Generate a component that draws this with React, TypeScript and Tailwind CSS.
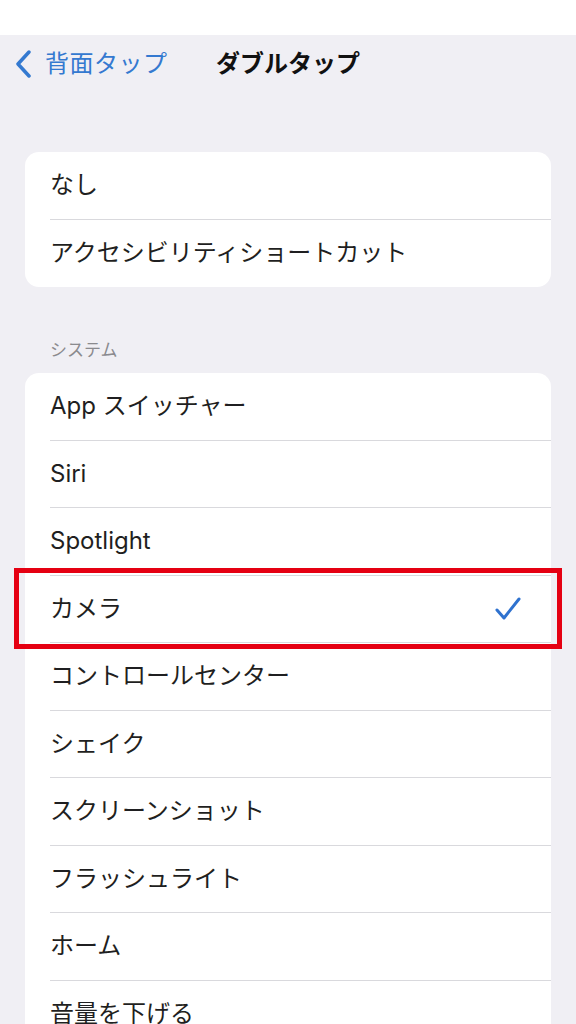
import React from "react";

const font = { fontFamily: 'Inter, "Noto Sans CJK JP", sans-serif' };

const options = [
  "App スイッチャー",
  "Siri",
  "Spotlight",
  "カメラ",
  "コントロールセンター",
  "シェイク",
  "スクリーンショット",
  "フラッシュライト",
  "ホーム",
  "音量を下げる",
];

function Row({ label, last, checked, highlight }: { label: string; last?: boolean; checked?: boolean; highlight?: boolean }) {
  return (
    <div className="relative h-[67.5px] pl-[25px]">
      <div className={"flex h-full items-center pr-[30px] " + (last ? "" : "border-b border-[#d9d9dd]")}>
        <span className="flex-1 text-[24px] text-[#1f1f21]">{label}</span>
        {checked && (
          <svg width="26" height="24" viewBox="0 0 26 24" fill="none">
            <path d="M2 13 L9 21 L24 2" stroke="#2f72cf" strokeWidth="3" strokeLinecap="round" strokeLinejoin="round" />
          </svg>
        )}
      </div>
      {highlight && (
        <div className="pointer-events-none absolute -left-[11px] -right-[11px] -top-[8px] -bottom-[6px] border-[5px] border-[#e50012]" />
      )}
    </div>
  );
}

export default function App() {
  return (
    <div className="h-[1024px] w-[576px] overflow-hidden bg-[#f0eff4]" style={font}>
      <div className="h-[35px] bg-white" />

      {/* nav bar */}
      <div className="relative flex h-[58px] items-center">
        <div className="flex items-center pl-[14px] text-[#3479d0]">
          <svg width="20" height="28" viewBox="0 0 20 28" fill="none">
            <path d="M15 2 L4 14 L15 26" stroke="#3479d0" strokeWidth="3.5" strokeLinecap="round" strokeLinejoin="round" />
          </svg>
          <span className="ml-[11px] text-[24px] tracking-[0.5px]">背面タップ</span>
        </div>
        <div className="absolute inset-x-0 text-center text-[24px] font-bold text-[#111]">ダブルタップ</div>
      </div>

      <div className="mt-[59px] mx-[25px] overflow-hidden rounded-[14px] bg-white">
        <Row label="なし" />
        <Row label="アクセシビリティショートカット" last />
      </div>

      <div className="mt-[52px] mb-[12px] h-[22px] pl-[50px] text-[17px] leading-[22px] text-[#8a8a8e]">システム</div>

      <div className="mx-[25px] rounded-t-[14px] bg-white">
        {options.map((o, i) => (
          <Row key={i} label={o} checked={o === "カメラ"} highlight={o === "カメラ"} last={i === options.length - 1} />
        ))}
      </div>
    </div>
  );
}
